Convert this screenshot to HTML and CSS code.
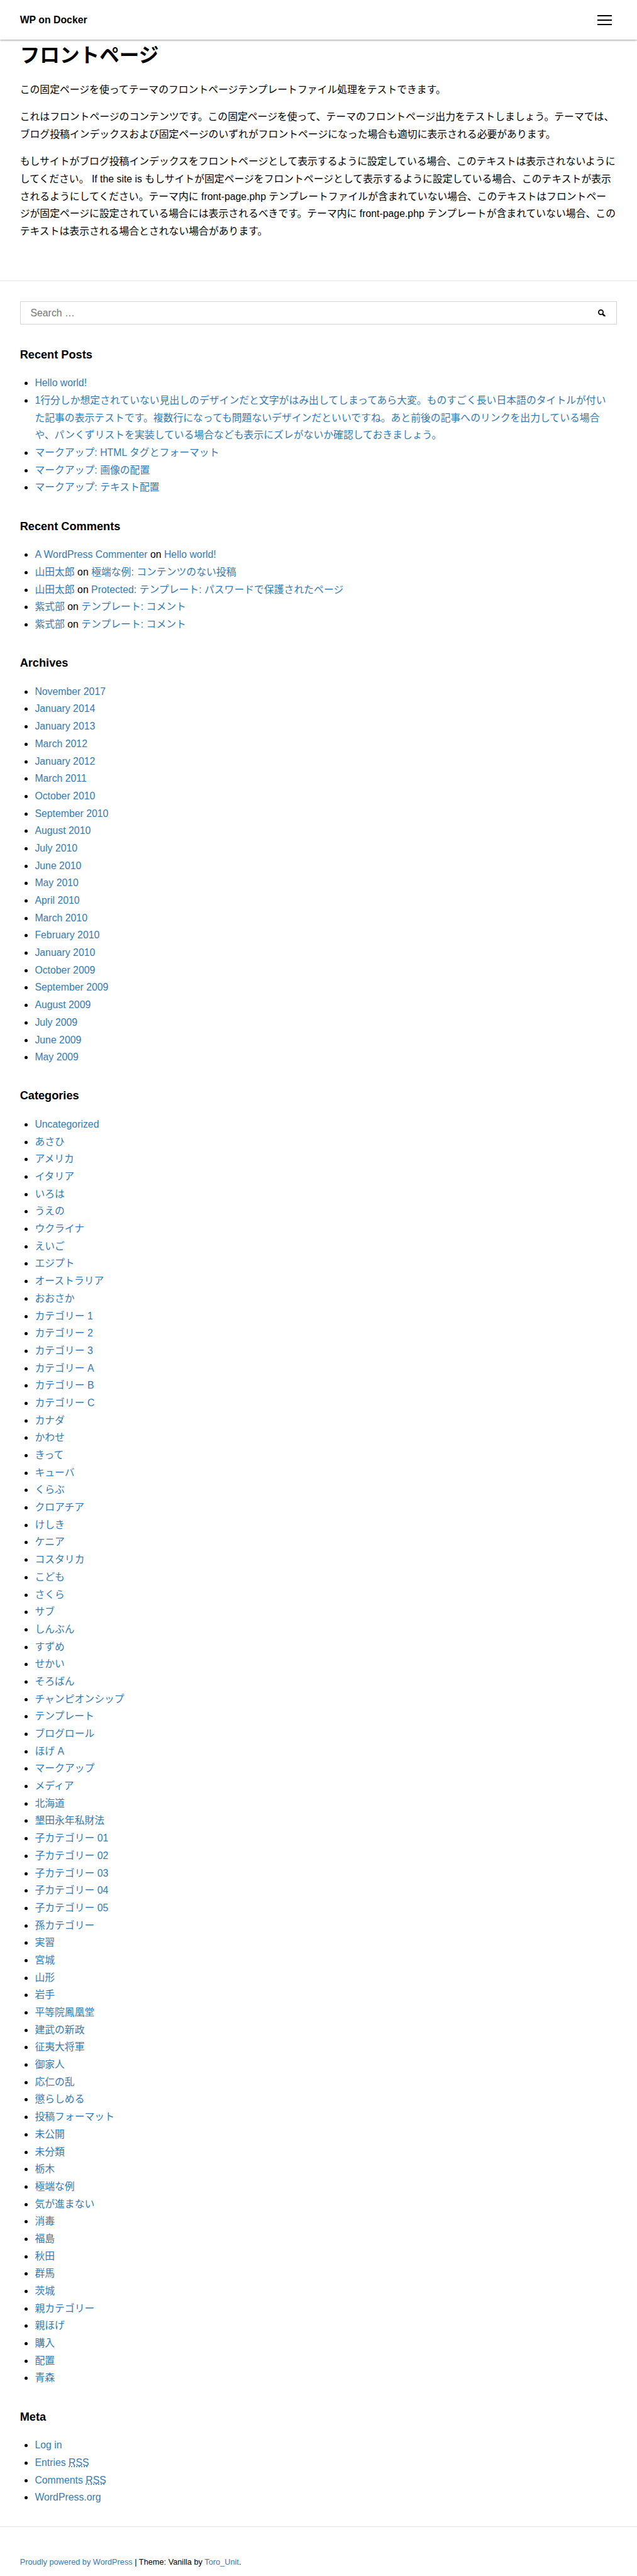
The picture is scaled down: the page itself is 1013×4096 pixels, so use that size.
FILE: index.html
```html
<!DOCTYPE html>
<html lang="ja">
<head>
<meta charset="utf-8">
<title>WP on Docker</title>
<link rel="stylesheet" href="styles.css">
</head>
<body>
<header class="site-header">
<a class="site-title" href="#">WP on Docker</a>
<button class="menu-toggle" aria-label="Menu"><span class="bar"></span><span class="bar"></span><span class="bar"></span></button>
</header>
<main class="content">
<h1 class="page-title">フロントページ</h1>
<p>この固定ページを使ってテーマのフロントページテンプレートファイル処理をテストできます。</p>
<p>これはフロントページのコンテンツです。この固定ページを使って、テーマのフロントページ出力をテストしましょう。テーマでは、<br>ブログ投稿インデックスおよび固定ページのいずれがフロントページになった場合も適切に表示される必要があります。</p>
<p>もしサイトがブログ投稿インデックスをフロントページとして表示するように設定している場合、このテキストは表示されないように<br>してください。 If the site is もしサイトが固定ページをフロントページとして表示するように設定している場合、このテキストが表示<br>されるようにしてください。テーマ内に front-page.php テンプレートファイルが含まれていない場合、このテキストはフロントペー<br>ジが固定ページに設定されている場合には表示されるべきです。テーマ内に front-page.php テンプレートが含まれていない場合、この<br>テキストは表示される場合とされない場合があります。</p>
</main>
<aside class="sidebar">
<form class="search-form">
<input class="search-field" type="text" placeholder="Search …">
<svg class="search-icon" viewBox="0 0 12 12"><circle cx="4.6" cy="4.6" r="3.7" fill="none" stroke="#000" stroke-width="1.7"/><path d="M7.2 7.2 8.2 8.2" stroke="#000" stroke-width="1.6"/><path d="M8.3 8.3 10.8 10.8" stroke="#000" stroke-width="2.5" stroke-linecap="round"/></svg>
</form>
<section class="widget">
<h2 class="widget-title">Recent Posts</h2>
<ul class="widget-list">
<li><a href="#">Hello world!</a></li>
<li><a href="#">1行分しか想定されていない見出しのデザインだと文字がはみ出してしまってあら大変。ものすごく長い日本語のタイトルが付い<br>た記事の表示テストです。複数行になっても問題ないデザインだといいですね。あと前後の記事へのリンクを出力している場合<br>や、パンくずリストを実装している場合なども表示にズレがないか確認しておきましょう。</a></li>
<li><a href="#">マークアップ: HTML タグとフォーマット</a></li>
<li><a href="#">マークアップ: 画像の配置</a></li>
<li><a href="#">マークアップ: テキスト配置</a></li>
</ul>
</section>
<section class="widget">
<h2 class="widget-title">Recent Comments</h2>
<ul class="widget-list">
<li><a href="#">A WordPress Commenter</a> on <a href="#">Hello world!</a></li>
<li><a href="#">山田太郎</a> on <a href="#">極端な例: コンテンツのない投稿</a></li>
<li><a href="#">山田太郎</a> on <a href="#">Protected: テンプレート: パスワードで保護されたページ</a></li>
<li><a href="#">紫式部</a> on <a href="#">テンプレート: コメント</a></li>
<li><a href="#">紫式部</a> on <a href="#">テンプレート: コメント</a></li>
</ul>
</section>
<section class="widget">
<h2 class="widget-title">Archives</h2>
<ul class="widget-list">
<li><a href="#">November 2017</a></li>
<li><a href="#">January 2014</a></li>
<li><a href="#">January 2013</a></li>
<li><a href="#">March 2012</a></li>
<li><a href="#">January 2012</a></li>
<li><a href="#">March 2011</a></li>
<li><a href="#">October 2010</a></li>
<li><a href="#">September 2010</a></li>
<li><a href="#">August 2010</a></li>
<li><a href="#">July 2010</a></li>
<li><a href="#">June 2010</a></li>
<li><a href="#">May 2010</a></li>
<li><a href="#">April 2010</a></li>
<li><a href="#">March 2010</a></li>
<li><a href="#">February 2010</a></li>
<li><a href="#">January 2010</a></li>
<li><a href="#">October 2009</a></li>
<li><a href="#">September 2009</a></li>
<li><a href="#">August 2009</a></li>
<li><a href="#">July 2009</a></li>
<li><a href="#">June 2009</a></li>
<li><a href="#">May 2009</a></li>
</ul>
</section>
<section class="widget">
<h2 class="widget-title">Categories</h2>
<ul class="widget-list">
<li><a href="#">Uncategorized</a></li>
<li><a href="#">あさひ</a></li>
<li><a href="#">アメリカ</a></li>
<li><a href="#">イタリア</a></li>
<li><a href="#">いろは</a></li>
<li><a href="#">うえの</a></li>
<li><a href="#">ウクライナ</a></li>
<li><a href="#">えいご</a></li>
<li><a href="#">エジプト</a></li>
<li><a href="#">オーストラリア</a></li>
<li><a href="#">おおさか</a></li>
<li><a href="#">カテゴリー 1</a></li>
<li><a href="#">カテゴリー 2</a></li>
<li><a href="#">カテゴリー 3</a></li>
<li><a href="#">カテゴリー A</a></li>
<li><a href="#">カテゴリー B</a></li>
<li><a href="#">カテゴリー C</a></li>
<li><a href="#">カナダ</a></li>
<li><a href="#">かわせ</a></li>
<li><a href="#">きって</a></li>
<li><a href="#">キューバ</a></li>
<li><a href="#">くらぶ</a></li>
<li><a href="#">クロアチア</a></li>
<li><a href="#">けしき</a></li>
<li><a href="#">ケニア</a></li>
<li><a href="#">コスタリカ</a></li>
<li><a href="#">こども</a></li>
<li><a href="#">さくら</a></li>
<li><a href="#">サブ</a></li>
<li><a href="#">しんぶん</a></li>
<li><a href="#">すずめ</a></li>
<li><a href="#">せかい</a></li>
<li><a href="#">そろばん</a></li>
<li><a href="#">チャンピオンシップ</a></li>
<li><a href="#">テンプレート</a></li>
<li><a href="#">ブログロール</a></li>
<li><a href="#">ほげ A</a></li>
<li><a href="#">マークアップ</a></li>
<li><a href="#">メディア</a></li>
<li><a href="#">北海道</a></li>
<li><a href="#">墾田永年私財法</a></li>
<li><a href="#">子カテゴリー 01</a></li>
<li><a href="#">子カテゴリー 02</a></li>
<li><a href="#">子カテゴリー 03</a></li>
<li><a href="#">子カテゴリー 04</a></li>
<li><a href="#">子カテゴリー 05</a></li>
<li><a href="#">孫カテゴリー</a></li>
<li><a href="#">実習</a></li>
<li><a href="#">宮城</a></li>
<li><a href="#">山形</a></li>
<li><a href="#">岩手</a></li>
<li><a href="#">平等院鳳凰堂</a></li>
<li><a href="#">建武の新政</a></li>
<li><a href="#">征夷大将軍</a></li>
<li><a href="#">御家人</a></li>
<li><a href="#">応仁の乱</a></li>
<li><a href="#">懲らしめる</a></li>
<li><a href="#">投稿フォーマット</a></li>
<li><a href="#">未公開</a></li>
<li><a href="#">未分類</a></li>
<li><a href="#">栃木</a></li>
<li><a href="#">極端な例</a></li>
<li><a href="#">気が進まない</a></li>
<li><a href="#">消毒</a></li>
<li><a href="#">福島</a></li>
<li><a href="#">秋田</a></li>
<li><a href="#">群馬</a></li>
<li><a href="#">茨城</a></li>
<li><a href="#">親カテゴリー</a></li>
<li><a href="#">親ほげ</a></li>
<li><a href="#">購入</a></li>
<li><a href="#">配置</a></li>
<li><a href="#">青森</a></li>
</ul>
</section>
<section class="widget">
<h2 class="widget-title">Meta</h2>
<ul class="widget-list">
<li><a href="#">Log in</a></li>
<li><a href="#">Entries <abbr title="Really Simple Syndication">RSS</abbr></a></li>
<li><a href="#">Comments <abbr title="Really Simple Syndication">RSS</abbr></a></li>
<li><a href="#">WordPress.org</a></li>
</ul>
</section>
</aside>
<footer class="site-footer"><a href="#">Proudly powered by WordPress</a> | Theme: Vanilla by <a href="#">Toro_Unit</a>.</footer>
</body>
</html>
```
FILE: styles.css
```css
*, *::before, *::after { box-sizing: border-box; }
html { font-size: 15.823px; }
body {
  margin: 0;
  background: #fff;
  color: #000;
  font-family: "Liberation Sans", "Noto Sans CJK JP", sans-serif;
  font-size: 15.845px;
  line-height: 1.75rem;
}
a { color: #337ab7; text-decoration: none; }
.site-header {
  display: flex;
  align-items: center;
  justify-content: space-between;
  height: 4rem;
  padding: 0 2.5rem 0 2rem;
  background: #fff;
  box-shadow: 0 1px 3px rgba(0, 0, 0, .4);
}
.site-title { color: #000; font-weight: 700; }
.menu-toggle {
  display: flex;
  flex-direction: column;
  gap: .3125rem;
  width: 1.5rem;
  padding: 0;
  border: 0;
  background: none;
}
.bar { height: .125rem; background: #000; }
.content { padding: 0 2rem; height: 24.1875rem; }
.page-title {
  margin: 0 0 1.25rem;
  padding-top: .375rem;
  font-size: 2rem;
  line-height: 2.5rem;
}
.content p { margin: 0 0 1rem; white-space: nowrap; }
.sidebar { padding: 2rem; border-top: 1px solid #e5e5e5; }
.search-form {
  display: flex;
  align-items: center;
  height: 2.375rem;
  padding: 0 1.125rem 0 1rem;
  border: 1px solid #d5d5d5;
}
.search-field {
  flex: 1;
  padding: 0;
  border: 0;
  outline: 0;
  background: none;
  font: inherit;
}
.search-field::placeholder { color: #757575; }
.search-icon { width: .75rem; height: .75rem; }
.widget { margin-top: 2.1875rem; }
.widget-title {
  margin: 0 0 1.0625rem;
  font-size: 1.15rem;
  line-height: 1.75rem;
}
.widget-list { margin: 0; padding-left: 1.5rem; white-space: nowrap; }
.site-footer {
  height: 5rem;
  padding: 2.875rem 2rem 0;
  border-top: 1px solid #e5e5e5;
  font-size: .807rem;
  line-height: 1.4rem;
}
```
